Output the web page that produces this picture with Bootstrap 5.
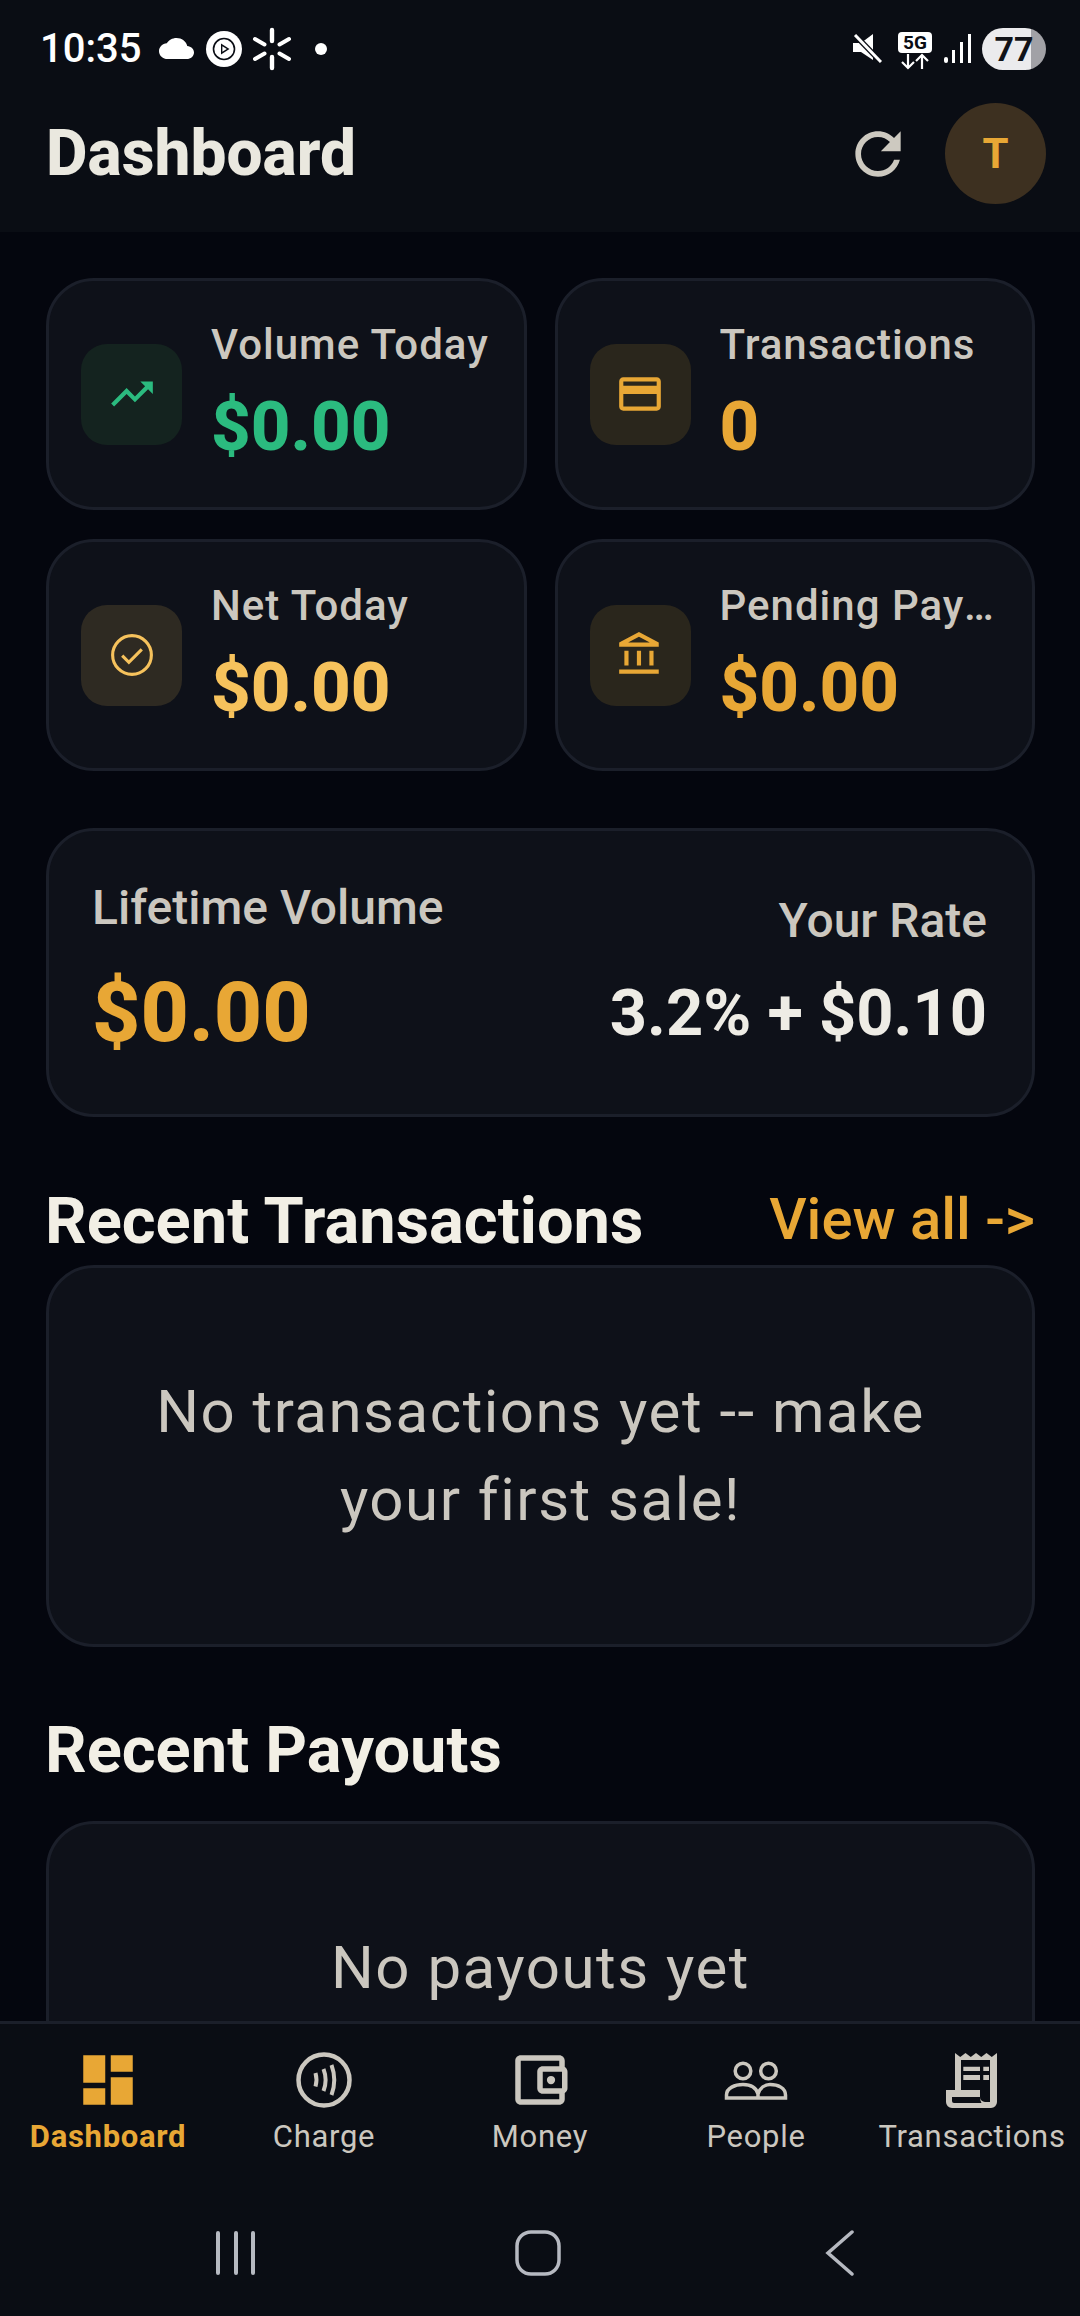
<!DOCTYPE html><html lang="en">
<head>
  <meta charset="UTF-8" />
  <meta name="viewport" content="width=device-width, initial-scale=1.0" />
  <title>Dashboard</title>
  <link href="https://cdn.jsdelivr.net/npm/bootstrap@5.3.0/dist/css/bootstrap.min.css" rel="stylesheet">
  <style>
    :root { --amber: #e8a735; --amber-soft: #f6c25c; --green: #2bbb7f; --cream: #ece9e0; --muted: #cbc7bf; --edge: #1b1f2a; }
    html, body { height: 100%; }
    body { background: #04060e; font-family: Roboto, "Liberation Sans", sans-serif; color: var(--cream); overflow: hidden; }
    .app-shell { height: 2316px; }

    .app-head { background: #0a0d14; height: 232px; flex-shrink: 0; }
    .status-row { height: 97px; padding: 0 34px 0 40px; color: #fff; }
    .status-time { font-size: 40px; font-weight: 500; line-height: 1; width: 119px; }
    .five-g { width: 34px; }
    .five-g-box { background: #fff; color: #0a0d14; font-size: 19px; font-weight: 700; line-height: 21px; border-radius: 4px; text-align: center; height: 21px; }
    .batt-pill { width: 64px; height: 42px; border-radius: 21px; background: linear-gradient(90deg, #ebebed 77%, #a1a1a6 77%); color: #111318; font-size: 34px; font-weight: 700; line-height: 42px; text-align: center; }
    .tool-row { height: 113px; padding: 0 34px 0 46px; }
    .page-title { font-size: 64px; font-weight: 800; line-height: 1; margin: 0; color: #eae8df; }
    .user-bubble { width: 101px; height: 101px; border-radius: 50%; background: #3d3020; color: var(--amber); font-size: 42px; font-weight: 700; }

    .dash-main { padding: 46px 45px 0 46px; overflow: hidden; min-height: 0; }
    .stat-grid { --bs-gutter-x: 28px; --bs-gutter-y: 29px; }
    .dash-card { background: #0e1119; border: 3px solid var(--edge); border-radius: 48px; color: inherit; }
    .stat-card { height: 232px; padding: 0 32px; gap: 29px; }
    .stat-copy { padding-top: 8px; }
    .stat-icon { width: 101px; height: 101px; border-radius: 26px; flex-shrink: 0; }
    .tint-green { background: #14231f; color: var(--green); }
    .tint-amber { background: #2a261c; color: var(--amber); }
    .tint-soft { background: #2e2a22; color: var(--amber-soft); }
    .stat-label { font-size: 42px; font-weight: 500; line-height: 58px; color: var(--muted); letter-spacing: 1px; }
    .stat-value { font-size: 69px; font-weight: 800; line-height: 106px; }
    .txt-green { color: var(--green); }
    .txt-amber { color: var(--amber); }
    .txt-soft { color: var(--amber-soft); }

    .life-card { margin-top: 57px; height: 289px; padding: 0 45px 0 43px; }
    .life-left, .life-right { padding-top: 20px; }
    .life-label { font-size: 48px; font-weight: 500; line-height: 60px; color: var(--muted); }
    .life-value { font-size: 84px; font-weight: 800; line-height: 150px; color: var(--amber); }
    .rate-value { font-size: 65px; font-weight: 700; line-height: 124px; color: #eeece5; }

    .sect-head { height: 70px; margin-top: 70px; margin-bottom: 8px; }
    .sect-title { font-size: 65px; font-weight: 700; line-height: 70px; margin: 0 0 0 -1px; padding-bottom: 2px; color: #f2efe5; }
    .sect-link { font-size: 58px; font-weight: 500; color: var(--amber); text-decoration: none; line-height: 70px; padding-bottom: 6px; }
    .empty-card { padding: 100px 50px; font-size: 60px; font-weight: 400; letter-spacing: 1.500px; line-height: 88px; color: var(--muted); text-align: center; flex-shrink: 0; }
    .sect-head.payout-head { margin-top: 68px; margin-bottom: 36px; }

    .tab-bar { background: #0a0d14; border-top: 3px solid var(--edge); height: 295px; flex-shrink: 0; }
    .tab-row { height: 149px; padding-top: 23px; }
    .tab-link { width: 216px; color: var(--muted); text-decoration: none; font-size: 31px; line-height: 40px; letter-spacing: .7px; }
    .tab-link svg { display: block; margin-bottom: 4px; }
    .tab-link.is-active { color: var(--amber); font-weight: 700; }
    .sys-row { height: 143px; padding: 17px 4px 0 0; }
    .sys-slot { width: 302px; }
  </style>
</head>
<body>
  <div class="app-shell d-flex flex-column">

    <!-- Status bar + title -->
    <header class="app-head">
      <div class="status-row d-flex align-items-center">
        <span class="status-time">10:35</span>
        <svg width="35" height="21" viewBox="0 4 24 16" preserveAspectRatio="none" fill="#fff"><path d="M19.35 10.04C18.67 6.59 15.64 4 12 4 9.11 4 6.6 5.64 5.35 8.04 2.34 8.36 0 10.91 0 14c0 3.31 2.69 6 6 6h13c2.76 0 5-2.24 5-5 0-2.64-2.05-4.78-4.65-4.96z"/></svg>
        <svg width="36" height="36" viewBox="0 0 36 36" style="margin-left:12px"><circle cx="18" cy="18" r="18" fill="#fff"/><circle cx="18" cy="18" r="10.5" fill="#fff" stroke="#0a0d14" stroke-width="1.6"/><path d="M15 12.5v11l8.5-5.5z" fill="#0a0d14"/><path d="M16.4 15.2v5.6l4.4-2.8z" fill="#fff"/></svg>
        <svg width="44" height="44" viewBox="0 0 44 44" stroke="#fff" stroke-linecap="round" style="margin-left:8px"><g stroke-width="4.4"><path d="M22 3v11M22 30v11"/></g><g stroke-width="4"><path d="M5 12l9.5 5.5M29.5 26.500l9.500 5.500M39 12l-9.500 5.500M14.500 26.500L5 32"/></g></svg>
        <svg width="12" height="12" viewBox="0 0 12 12" fill="#fff" style="margin-left:21px"><circle cx="6" cy="6" r="6"/></svg>
        <div class="d-flex align-items-center ms-auto">
          <svg width="29" height="29" viewBox="0 0 29 29"><path d="M0 9h8L20 0v26L8 18H0z" fill="#fff"/><path d="M1 0l27 28" stroke="#0a0d14" stroke-width="5.500"/><path d="M2 1l26 27" stroke="#fff" stroke-width="3"/></svg>
          <div class="five-g d-flex flex-column" style="margin-left:16px;margin-top:5px">
            <div class="five-g-box">5G</div>
            <svg width="34" height="17" viewBox="0 0 34 17" fill="none" stroke="#fff" stroke-width="2.2"><path d="M10 1v14M4 9l6 6 6-6M24 16V2M18 8l6-6 6 6"/></svg>
          </div>
          <svg width="28" height="29" viewBox="0 0 28 29" fill="#fff" style="margin-left:12px"><rect x="0" y="23" width="4" height="6" rx="2"/><rect x="8" y="16" width="3" height="13"/><rect x="16" y="8" width="3" height="21"/><rect x="24" y="0" width="3" height="29"/></svg>
          <div class="batt-pill" style="margin-left:10px">77</div>
        </div>
      </div>
      <div class="tool-row d-flex align-items-center">
        <h1 class="page-title">Dashboard</h1>
        <svg class="ms-auto" width="68" height="68" viewBox="0 0 24 24" fill="#cdc9c0" style="margin-right:33px"><path d="M17.65 6.35C16.2 4.9 14.21 4 12 4c-4.42 0-7.99 3.58-7.99 8s3.57 8 7.99 8c3.730 0 6.840-2.550 7.730-6h-2.080c-.82 2.330-3.040 4-5.650 4-3.310 0-6-2.690-6-6s2.690-6 6-6c1.660 0 3.140.69 4.220 1.780L13 11h7V4l-2.350 2.350z"/></svg>
        <div class="user-bubble d-flex align-items-center justify-content-center">T</div>
      </div>
    </header>

    <main class="dash-main flex-grow-1 d-flex flex-column">
      <!-- Stat tiles -->
      <div class="row row-cols-2 stat-grid flex-shrink-0">
        <div class="col">
          <div class="card dash-card stat-card flex-row align-items-center">
            <div class="stat-icon tint-green d-flex align-items-center justify-content-center">
              <svg width="50" height="50" viewBox="0 0 24 24" fill="currentColor"><path d="M16 6l2.290 2.290-4.880 4.880-4-4L2 16.590 3.410 18l6-6 4 4 6.300-6.290L22 12V6z"/></svg>
            </div>
            <div class="stat-copy flex-grow-1 overflow-hidden">
              <div class="stat-label text-truncate">Volume Today</div>
              <div class="stat-value txt-green">$0.00</div>
            </div>
          </div>
        </div>
        <div class="col">
          <div class="card dash-card stat-card flex-row align-items-center">
            <div class="stat-icon tint-amber d-flex align-items-center justify-content-center">
              <svg width="50" height="50" viewBox="0 0 24 24" fill="currentColor"><path d="M20 4H4c-1.110 0-1.990.89-1.990 2L2 18c0 1.110.89 2 2 2h16c1.110 0 2-.89 2-2V6c0-1.110-.89-2-2-2zm0 14H4v-6h16v6zm0-10H4V6h16v2z"/></svg>
            </div>
            <div class="stat-copy flex-grow-1 overflow-hidden">
              <div class="stat-label text-truncate">Transactions</div>
              <div class="stat-value txt-amber">0</div>
            </div>
          </div>
        </div>
        <div class="col">
          <div class="card dash-card stat-card flex-row align-items-center">
            <div class="stat-icon tint-soft d-flex align-items-center justify-content-center">
              <svg width="50" height="50" viewBox="0 0 24 24" fill="none" stroke="currentColor" stroke-width="1.500"><circle cx="12" cy="12" r="9.300"/><path d="M7.300 12.300l3.200 3.200 6.200-6.200"/></svg>
            </div>
            <div class="stat-copy flex-grow-1 overflow-hidden">
              <div class="stat-label text-truncate">Net Today</div>
              <div class="stat-value txt-soft">$0.00</div>
            </div>
          </div>
        </div>
        <div class="col">
          <div class="card dash-card stat-card flex-row align-items-center">
            <div class="stat-icon tint-amber d-flex align-items-center justify-content-center">
              <svg width="50" height="50" viewBox="0 0 24 24" fill="currentColor"><path d="M6.500 10h-2v7h2v-7zm6 0h-2v7h2v-7zm8.500 9H2v2h19v-2zm-2.500-9h-2v7h2v-7zm-7-6.740L16.710 6H6.290l5.210-2.740m0-2.260L2 6v2h19V6l-9.500-5z"/></svg>
            </div>
            <div class="stat-copy flex-grow-1 overflow-hidden">
              <div class="stat-label text-truncate">Pending Payouts</div>
              <div class="stat-value txt-amber">$0.00</div>
            </div>
          </div>
        </div>
      </div>

      <!-- Lifetime volume -->
      <div class="card dash-card life-card flex-row align-items-center justify-content-between flex-shrink-0">
        <div class="life-left">
          <div class="life-label">Lifetime Volume</div>
          <div class="life-value">$0.00</div>
        </div>
        <div class="life-right text-end">
          <div class="life-label">Your Rate</div>
          <div class="rate-value">3.2% + $0.10</div>
        </div>
      </div>

      <!-- Recent transactions -->
      <div class="sect-head d-flex justify-content-between align-items-center flex-shrink-0">
        <h2 class="sect-title">Recent Transactions</h2>
        <a class="sect-link" href="#">View all -&gt;</a>
      </div>
      <div class="card dash-card empty-card">No transactions yet -- make your first sale!</div>

      <!-- Recent payouts -->
      <div class="sect-head payout-head flex-shrink-0">
        <h2 class="sect-title">Recent Payouts</h2>
      </div>
      <div class="card dash-card empty-card">No payouts yet</div>
    </main>

    <!-- Bottom tabs + system nav -->
    <footer class="tab-bar">
      <div class="tab-row d-flex">
        <a class="tab-link is-active d-flex flex-column align-items-center" href="#">
          <svg width="66" height="66" viewBox="0 0 24 24" fill="currentColor"><path d="M3 13h8V3H3v10zm0 8h8v-6H3v6zm10 0h8V11h-8v10zm0-18v6h8V3h-8z"/></svg>
          Dashboard
        </a>
        <a class="tab-link d-flex flex-column align-items-center" href="#">
          <svg width="66" height="66" viewBox="0 0 66 66" fill="none" stroke="currentColor" stroke-width="4.500"><circle cx="33" cy="33" r="25.500"/><g stroke-width="4"><path d="M24.500 26c1.300 4.500 1.300 9 0 13.500"/><path d="M32.500 22c2.700 7 2.700 15 0 22"/><path d="M40.500 18c3.700 10 3.700 20 0 30"/></g></svg>
          Charge
        </a>
        <a class="tab-link d-flex flex-column align-items-center" href="#">
          <svg width="66" height="66" viewBox="0 0 24 24" fill="currentColor"><path d="M21 7.280V5c0-1.100-.9-2-2-2H5c-1.110 0-2 .9-2 2v14c0 1.100.89 2 2 2h14c1.100 0 2-.9 2-2v-2.280c.59-.35 1-.98 1-1.720V9c0-.74-.41-1.380-1-1.720zM20 9v6h-7V9h7zM5 19V5h14v2h-6c-1.100 0-2 .9-2 2v6c0 1.100.9 2 2 2h6v2H5z"/><circle cx="16" cy="12" r="1.500"/></svg>
          Money
        </a>
        <a class="tab-link d-flex flex-column align-items-center" href="#">
          <svg width="66" height="66" viewBox="0 0 66 66" fill="none" stroke="currentColor" stroke-width="3.500"><circle cx="20" cy="24" r="7.800"/><circle cx="45.500" cy="24" r="7.800"/><path d="M3.500 51v-3c0-7 8.500-10.500 16.500-10.500 7 0 13 2.500 15 9.500v4zM35 47c2-6 7-9.500 12-9.500 8 0 15.500 3.500 15.500 10.500v3H35"/></svg>
          People
        </a>
        <a class="tab-link d-flex flex-column align-items-center" href="#">
          <svg width="66" height="66" viewBox="0 0 66 66" fill="currentColor"><path fill-rule="evenodd" d="M16 6l5.250 4 5.250-4 5.250 4 5.250-4 5.250 4 5.250-4 5.250 4 5.250-4V55a6 6 0 0 1-6 6H13a6 6 0 0 1-6-6V43h9zM22 13v30h19v7a5 5 0 0 0 5 5h5V13zM13 50v4a2 2 0 0 0 2 2h27.500c-1-1.800-1.500-3.800-1.500-6z"/><path d="M24.300 19.700H41V24H24.300zM24.300 28H41v5H24.300zM44.300 19.700H50V24h-5.700zM44.300 28H50v5h-5.700z"/></svg>
          Transactions
        </a>
      </div>
      <div class="sys-row d-flex align-items-center justify-content-center">
        <div class="sys-slot d-flex justify-content-center">
          <svg width="44" height="44" viewBox="0 0 44 44" stroke="#b6b9c1" stroke-width="4" stroke-linecap="round"><path d="M4 2v40M22 2v40M39 2v40"/></svg>
        </div>
        <div class="sys-slot d-flex justify-content-center">
          <svg width="46" height="46" viewBox="0 0 46 46" fill="none" stroke="#b6b9c1" stroke-width="3.500"><rect x="2" y="2" width="42" height="42" rx="14"/></svg>
        </div>
        <div class="sys-slot d-flex justify-content-center">
          <svg width="30" height="46" viewBox="0 0 30 46" fill="none" stroke="#b6b9c1" stroke-width="3.500" stroke-linecap="round"><path d="M27 2L3 23l24 21"/></svg>
        </div>
      </div>
    </footer>
  </div>

  <script src="https://cdn.jsdelivr.net/npm/bootstrap@5.3.0/dist/js/bootstrap.bundle.min.js"></script>
</body>
</html>
